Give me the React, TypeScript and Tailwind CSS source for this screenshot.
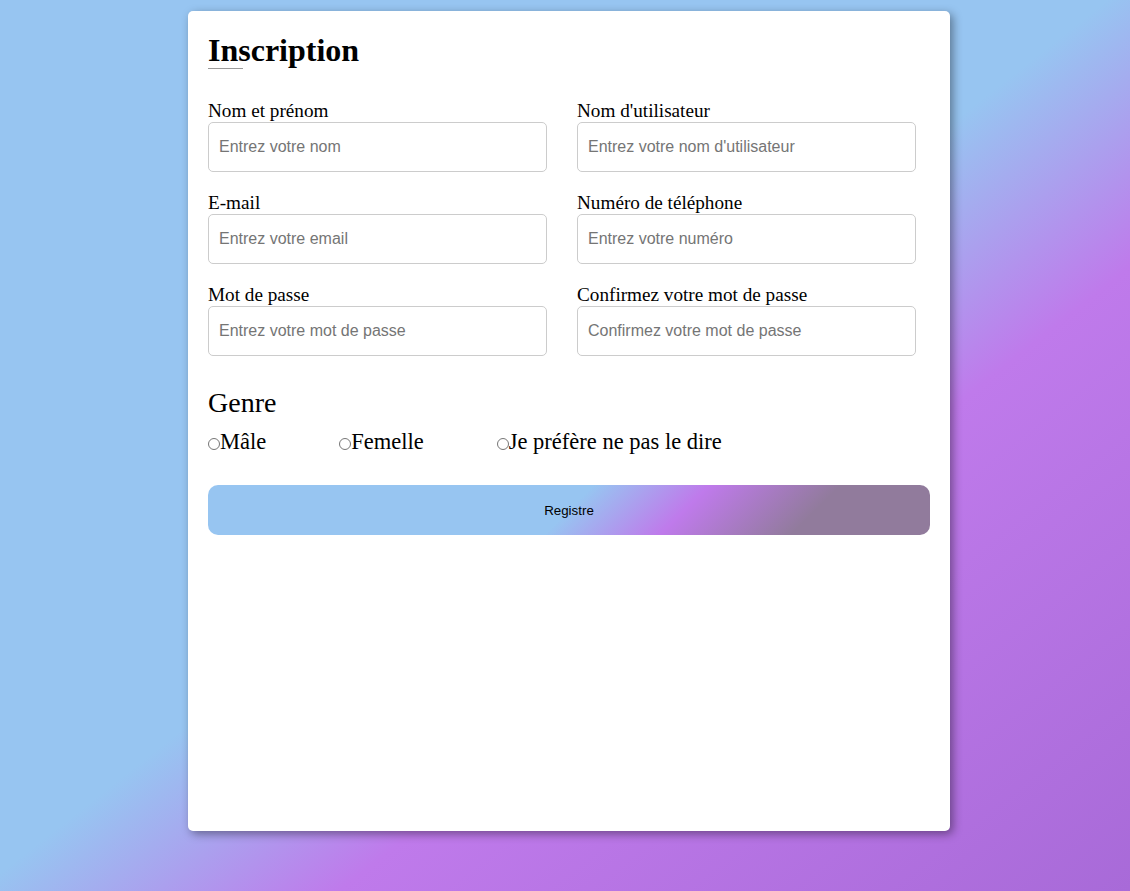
import React from 'react';

const fields = [
  { label: 'Nom et prénom', placeholder: 'Entrez votre nom', type: 'text' },
  { label: "Nom d'utilisateur", placeholder: "Entrez votre nom d'utilisateur", type: 'text' },
  { label: 'E-mail', placeholder: 'Entrez votre email', type: 'text' },
  { label: 'Numéro de téléphone', placeholder: 'Entrez votre numéro', type: 'text' },
  { label: 'Mot de passe', placeholder: 'Entrez votre mot de passe', type: 'text' },
  { label: 'Confirmez votre mot de passe', placeholder: 'Confirmez votre mot de passe', type: 'text' },
];

const genres = ['Mâle', 'Femelle', 'Je préfère ne pas le dire'];

const App = () => {
  return (
    <div className="min-h-screen bg-[linear-gradient(to_bottom_right,#97c5f1_49%,#bf7aeb_65%,#a86ad8_100%)] flex justify-center pl-[8px] pt-[11px] font-['Liberation_Serif',serif] text-black">
      <div className="w-[762px] h-[820px] bg-white rounded-[5px] shadow-[3px_3px_10px_rgba(0,0,0,0.4)] px-[20px] pt-[22px]">
        {/* Title */}
        <h1 className="text-[32px] font-bold leading-[35px]">Inscription</h1>
        <div className="h-px w-[35px] bg-[#9a9a9a]"></div>

        {/* Fields */}
        <div className="grid grid-cols-[339px_339px] gap-x-[30px] gap-y-[20px] mt-[31px]">
          {fields.map((f) => (
            <div key={f.label} className="flex flex-col">
              <label className="text-[19.2px] leading-[22px]">{f.label}</label>
              <input
                type={f.type}
                placeholder={f.placeholder}
                className="h-[50px] border border-[#cccccc] rounded-[5px] pl-[10px] font-['Liberation_Sans',sans-serif] text-[16px] placeholder:text-[#757575] outline-none"
              />
            </div>
          ))}
        </div>

        {/* Genre */}
        <div className="mt-[31px]">
          <h2 className="text-[28px] leading-[32px]">Genre</h2>
          <div className="flex gap-[73px] mt-[10px] text-[22.5px] leading-[26px]">
            {genres.map((g) => (
              <label key={g} className="flex items-end">
                <span className="w-[12px] h-[12px] rounded-full border border-[#767676] mb-[5px] bg-white"></span>
                <span>{g}</span>
              </label>
            ))}
          </div>
        </div>

        {/* Button */}
        <button className="mt-[30px] w-full h-[50px] pt-px rounded-[10px] bg-[linear-gradient(135deg,#97c5f1_50%,#bf7aeb_65%,#917b9c_82%)] font-['Liberation_Sans',sans-serif] text-[13.33px] text-black">
          Registre
        </button>
      </div>
    </div>
  );
};

export default App;
